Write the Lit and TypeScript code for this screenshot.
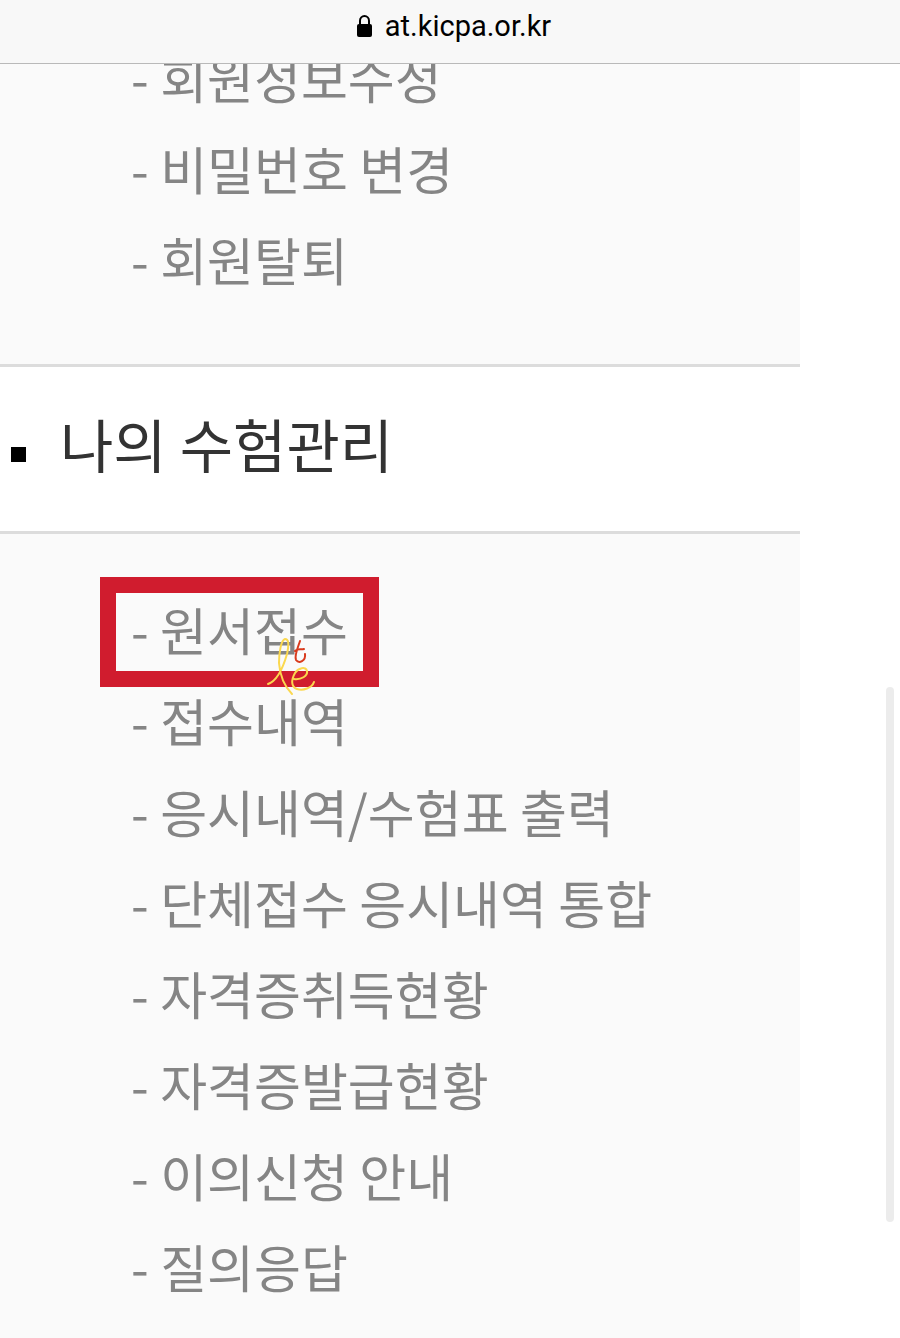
import { LitElement, html, css } from "lit";
import { customElement } from "lit/decorators.js";

@customElement("app-root")
export class AppRoot extends LitElement {
  static styles = css`
    :host { display: block; height: 100vh; overflow: hidden; background: #fff; position: relative;
      font-family: "Noto Sans CJK KR", sans-serif; }
    .bar { position: relative; z-index: 1; box-sizing: border-box; height: 64px; padding: 0 0 12px 8px; display: flex; align-items: center; justify-content: center; gap: 13px;
      background: #f8f8f8; border-bottom: 1px solid #b9b9b9; font: 29px/36px Roboto, sans-serif; color: #000; }
    .lock { width: 15px; height: 22px; }
    .page { margin-right: 100px; }
    .group { margin: 0; padding: 0 0 0 131px; list-style: none; background: #fafafa; color: #858585; font-size: 51px; line-height: 91px; }
    .account { margin-top: -32px; padding-bottom: 59px; }
    .exam { padding-top: 50px; padding-bottom: 60px; }
    .group a { color: inherit; text-decoration: none; }
    .title { margin: 0; padding: 0 11px 12px; display: flex; align-items: center; gap: 34px; height: 152px; border: solid #dcdcdc; border-width: 3px 0; font-size: 58px; font-weight: 400; color: #333; }
    .bullet { width: 15px; height: 15px; background: #000; margin-top: 22px; }
    .marked { position: relative; }
    .frame { position: absolute; left: -31px; top: -7px; width: 279px; height: 110px; box-sizing: border-box; border: 16px solid #d01c2e; }
    .scribble { position: absolute; left: 119px; top: 46px; width: 80px; height: 70px; fill: none; stroke-width: 2; stroke-linecap: round; stroke-linejoin: round; }
    .scroll { position: absolute; right: 6px; top: 687px; width: 8px; height: 535px; border-radius: 4px; background: #ececec; }
  `;

  private account = ["회원정보수정", "비밀번호 변경", "회원탈퇴"];
  private exam = ["접수내역", "응시내역/수험표 출력", "단체접수 응시내역 통합", "자격증취득현황", "자격증발급현황", "이의신청 안내", "질의응답"];

  private row(name: string) {
    return html`<li><a href="#">- ${name}</a></li>`;
  }

  render() {
    return html`
      <header class="bar">
        <svg class="lock" viewBox="0 0 15 22"><rect y="9" width="15" height="13" rx="2" fill="#000"/><path d="M3 10V5.8a4.5 4.8 0 0 1 9 0V10" fill="none" stroke="#000" stroke-width="2"/></svg>
        <span>at.kicpa.or.kr</span>
      </header>
      <main class="page">
        <ul class="group account">${this.account.map((n) => this.row(n))}</ul>
        <h2 class="title"><span class="bullet"></span>나의 수험관리</h2>
        <ul class="group exam">
          <li class="marked"><a href="#">- 원서접수</a><span class="frame"></span>
            <svg class="scribble" viewBox="0 0 80 70">
              <path stroke="#fbd84f" d="M18 54C27 51 33 38 37 24C39 15 39 9 35 9C31 10 29 23 29 33C30 46 35 57 42 64"/>
              <path stroke="#fbd84f" d="M44 49C51 50 58 46 57 41C56 36 48 38 45 43C41 50 41 57 47 59C53 61 62 58 64 52"/>
              <path stroke="#d93a1c" d="M50 11C48 17 44 26 46 30C49 34 56 31 55 24M45 21C48 18 51 20 54 19"/>
            </svg>
          </li>
          ${this.exam.map((n) => this.row(n))}
        </ul>
      </main>
      <div class="scroll"></div>
    `;
  }
}
